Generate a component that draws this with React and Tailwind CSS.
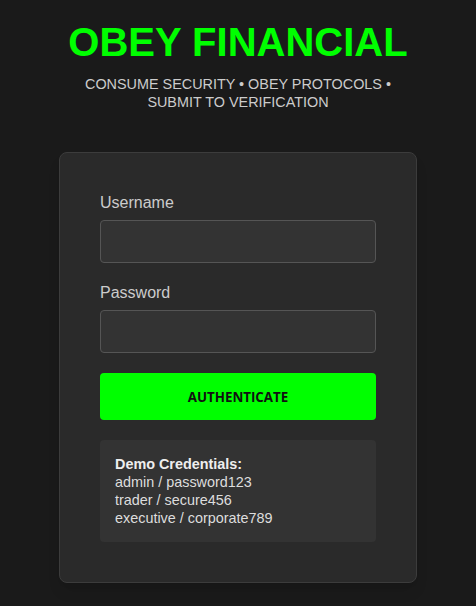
export default function App() {
  return (
    <div className="min-h-screen bg-[#1a1a1a] pt-[19px] pb-10 font-['Liberation_Sans',Arial,sans-serif]">
      {/* Header */}
      <div className="max-w-[360px] mx-auto text-center">
        <h1 className="text-[40px] leading-[46px] font-bold text-[#00ff00]">OBEY FINANCIAL</h1>
        <p className="mt-[10px] text-[14.4px] leading-[18px] text-[#cccccc]">
          CONSUME SECURITY • OBEY PROTOCOLS • SUBMIT TO VERIFICATION
        </p>
      </div>

      {/* Login card */}
      <div className="w-[358px] mx-auto mt-[41px] bg-[#2a2a2a] border border-[#3c3c3c] rounded-lg p-10 shadow-lg">
        <div className="mb-5">
          <label className="block text-base leading-[19px] text-[#cccccc] mb-2">Username</label>
          <input type="text" className="block w-full h-[43px] bg-[#333333] border border-[#555555] rounded text-white px-3 outline-none" />
        </div>
        <div className="mb-5">
          <label className="block text-base leading-[19px] text-[#cccccc] mb-2">Password</label>
          <input type="password" className="block w-full h-[43px] bg-[#333333] border border-[#555555] rounded text-white px-3 outline-none" />
        </div>
        <button className="block w-full h-[47px] pt-[2px] bg-[#00ff00] rounded text-[#111111] font-['Open_Sans',sans-serif] font-bold text-[13.33px] uppercase">
          Authenticate
        </button>
        <div className="mt-5 bg-[#333333] rounded px-[15px] py-[15px] text-[14.4px] leading-[18px] text-[#dddddd]">
          <p className="font-bold text-[#eeeeee]">Demo Credentials:</p>
          <p>admin / password123</p>
          <p>trader / secure456</p>
          <p>executive / corporate789</p>
        </div>
      </div>
    </div>
  );
}
